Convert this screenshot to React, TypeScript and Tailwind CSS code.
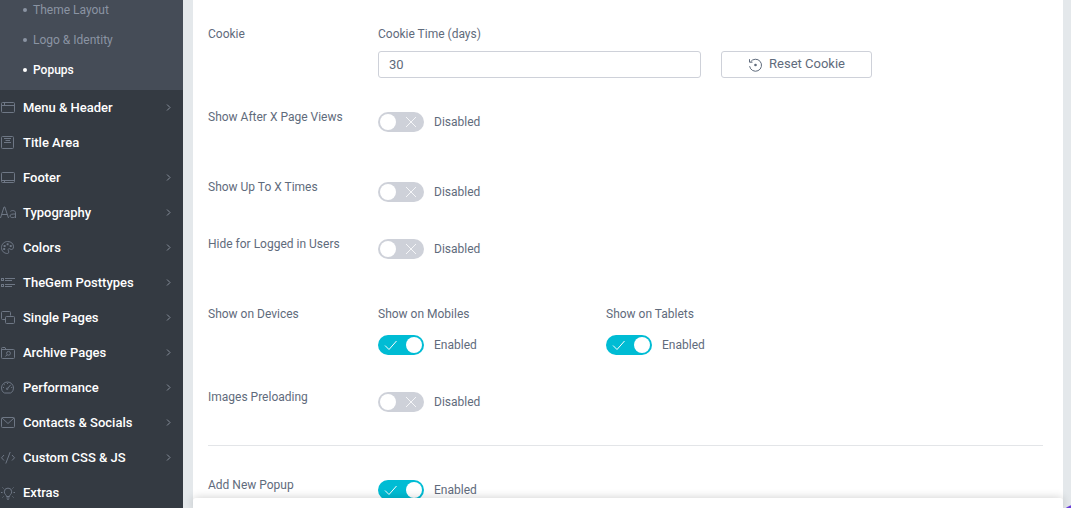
import { useState } from "react";
import type { ReactNode } from "react";

type MenuItem = { label: string; icon: ReactNode; expandable: boolean };

const subItems = [
  { label: "Theme Layout", active: false },
  { label: "Logo & Identity", active: false },
  { label: "Popups", active: true },
];

const menuItems: MenuItem[] = [
  {
    label: "Menu & Header",
    expandable: true,
    icon: (
      <>
        <rect x="1.5" y="2.5" width="13" height="10" rx="1" />
        <path d="M1.5 5.5h13M4.500 3v2" />
      </>
    ),
  },
  {
    label: "Title Area",
    expandable: false,
    icon: (
      <>
        <rect x="1.5" y="1.5" width="12" height="12" rx="1" />
        <path d="M4 3.5h7M5.500 5.5h4.500M4 7.5h7" />
      </>
    ),
  },
  {
    label: "Footer",
    expandable: true,
    icon: (
      <>
        <rect x="1.5" y="2.5" width="13" height="10" rx="1" />
        <path d="M1.5 10.5h13M4.5 10.5v2" />
      </>
    ),
  },
  {
    label: "Typography",
    expandable: true,
    icon: (
      <>
        <path d="M.5 13 4 2h.8L8.500 13M1.700 9.5h5.500" />
        <path d="M10.300 6.500c.9-1.300 5.200-1.500 5.200 1.200V13M15.500 9c-3.500-.1-5.500.3-5.500 2s3.700 2.400 5.500.3" />
      </>
    ),
  },
  {
    label: "Colors",
    expandable: true,
    icon: (
      <>
        <path d="M7.500 13.500C4 13.500 1.500 11 1.500 7.600S4.200 1.500 7.700 1.500s5.800 2.300 5.800 5.300c0 1.900-1 2.700-2.200 2.700-1 0-1.400-.9-2.200-.9s-1.300.8-.8 1.700c.6 1 .7 3.200-.8 3.200z" />
        <g fill="#6e7785" stroke="none">
          <rect x="3.200" y="8" width="2" height="2" rx=".5" />
          <rect x="3.600" y="4.900" width="2" height="2" rx=".5" />
          <rect x="6.600" y="3.200" width="2" height="2" rx=".5" />
          <rect x="9.700" y="4.900" width="2" height="2" rx=".5" />
        </g>
      </>
    ),
  },
  {
    label: "TheGem Posttypes",
    expandable: true,
    icon: (
      <>
        <rect x="1.500" y="3.500" width="2" height="2" />
        <rect x="1.500" y="9.500" width="2" height="2" />
        <path d="M5 3.500h10M5 5.500h7M5 9.500h10M5 11.500h7" />
      </>
    ),
  },
  {
    label: "Single Pages",
    expandable: true,
    icon: (
      <>
        <path d="M5.500 9.500h-3a1 1 0 0 1-1-1v-6a1 1 0 0 1 1-1h7a1 1 0 0 1 1 1v3" />
        <rect x="5.500" y="6.500" width="9" height="7" rx="1" />
      </>
    ),
  },
  {
    label: "Archive Pages",
    expandable: true,
    icon: (
      <>
        <path d="M1.500 12.500v-9a1 1 0 0 1 1-1h2.500l1 2h7.500a1 1 0 0 1 1 1v7a1 1 0 0 1-1 1h-11a1 1 0 0 1-1-1zM1.500 4.500h4.500" />
        <circle cx="8.500" cy="8.300" r="1.900" />
        <path d="m7 9.800-1.600 1.700" />
      </>
    ),
  },
  {
    label: "Performance",
    expandable: true,
    icon: (
      <>
        <path d="M3.300 12.300a6 6 0 1 1 8.400 0c-.4.500-.8.700-1.400.7H4.700c-.6 0-1-.2-1.400-.7z" />
        <path d="M7.800 8.200 10.700 4.800M3 7.500h1M11.200 7.500h1M7.500 3v1M4.300 4.500l.7.700" />
        <circle cx="7.200" cy="8.800" r=".8" />
      </>
    ),
  },
  {
    label: "Contacts & Socials",
    expandable: true,
    icon: (
      <>
        <rect x="1.500" y="2.500" width="13" height="10" rx="1" />
        <path d="m2 3 6 5.500L14 3" />
      </>
    ),
  },
  {
    label: "Custom CSS & JS",
    expandable: true,
    icon: <path d="M4 5 1.500 7.800 4 10.500M12 5l2.500 2.800L12 10.500M10.200 2 5.800 13.500" />,
  },
  {
    label: "Extras",
    expandable: false,
    icon: (
      <>
        <path d="M6.500 11.500c0-1.700-2.200-2.300-2.200-4.700a3.700 3.700 0 0 1 7.400 0c0 2.400-2.200 3-2.200 4.700zM6.500 13h3M7.300 14.500h1.400" />
        <path d="M1 7.500h1.500M13.500 7.500H15M2.500 2.500l1 1M13.500 2.500l-1 1M2.500 12.500l1-1M13.500 12.500l-1-1" />
      </>
    ),
  },
];

function Sidebar() {
  return (
    <nav className="w-[183px] shrink-0 overflow-hidden bg-[#343a42] text-[13px]">
      <ul className="-mt-[5px] bg-[#454c57] pb-[5px] text-xs">
        {subItems.map(({ label, active }) => (
          <li key={label}>
            <a
              href="#"
              className={`flex h-[30px] items-center gap-1.5 pl-[23px] ${active ? "font-medium text-white" : "text-[#8b94a3]"}`}
            >
              <span className="size-1 rounded-full bg-current" />
              {label}
            </a>
          </li>
        ))}
      </ul>
      <ul>
        {menuItems.map(({ label, icon, expandable }) => (
          <li key={label}>
            <a href="#" className="flex h-[35px] items-center pr-3 font-medium text-white">
              <svg viewBox="0 -1 16 17" fill="none" stroke="#6e7785" className="mr-[7px] h-[17px] w-4 shrink-0">
                {icon}
              </svg>
              <span className="flex-1">{label}</span>
              {expandable && (
                <svg viewBox="0 0 5 7" fill="none" stroke="#858d99" className="h-[7px] w-[5px]">
                  <path d="m1 .5 3 3-3 3" />
                </svg>
              )}
            </a>
          </li>
        ))}
      </ul>
    </nav>
  );
}

function Toggle({ name, initial = false }: { name: string; initial?: boolean }) {
  const [on, setOn] = useState(initial);
  return (
    <label className="flex h-5 w-fit cursor-pointer items-center gap-2.5">
      <input
        type="checkbox"
        role="switch"
        aria-label={name}
        checked={on}
        onChange={(e) => setOn(e.target.checked)}
        className="peer sr-only"
      />
      <span
        className={`flex h-5 w-[46px] items-center justify-between rounded-full px-0.5 ${on ? "flex-row-reverse bg-[#00bcd4]" : "bg-[#ced1d9]"}`}
      >
        <span className="size-4 rounded-full bg-white" />
        <svg viewBox="0 0 14 12" fill="none" stroke="white" className="mx-1 h-3 w-3.5">
          {on ? <path d="m1 6.500 4 4 7.500-8.500" /> : <path d="m2 1 10 10M12 1 2 11" strokeOpacity=".8" />}
        </svg>
      </span>
      <span>{on ? "Enabled" : "Disabled"}</span>
    </label>
  );
}

function Row({ label, className, children }: { label: string; className: string; children: ReactNode }) {
  return (
    <div className={`flex ${className}`}>
      <h3 className="w-[170px] shrink-0">{label}</h3>
      <div className="min-w-0 flex-1">{children}</div>
    </div>
  );
}

function ResetIcon() {
  return (
    <svg viewBox="0 0 16 16" fill="none" stroke="currentColor" className="size-4">
      <path d="M2.600 5.800A6 6 0 1 1 1.600 10.200" />
      <path d="M1.500 3.200v3h3" />
      <circle cx="7.500" cy="9" r="1.300" fill="currentColor" stroke="none" />
    </svg>
  );
}

export default function App() {
  return (
    <div className="relative flex h-screen overflow-hidden bg-[#e4e8eb] font-['Roboto',sans-serif]">
      <Sidebar />
      <main className="mr-2 ml-2.5 flex min-w-0 flex-1 flex-col bg-white text-xs leading-5 text-[#5f6b7c]">
        <div className="min-h-0 flex-1 overflow-hidden pt-6 pr-5 pl-[15px]">
          <Row label="Cookie" className="mb-[29px]">
            <div className="flex items-end gap-5">
              <div className="w-[323px]">
                <label htmlFor="cookie-time" className="mb-[7px] block">
                  Cookie Time (days)
                </label>
                <input
                  id="cookie-time"
                  defaultValue="30"
                  className="block h-[27px] w-full rounded-[3px] border border-[#ced1d9] px-2.5 text-[13px] outline-none"
                />
              </div>
              <button
                type="button"
                className="flex h-[27px] w-[151px] items-center justify-center gap-[5px] rounded-[3px] border border-[#ced1d9] pb-0.5 text-[13px]"
              >
                <ResetIcon />
                Reset Cookie
              </button>
            </div>
          </Row>
          <Row label="Show After X Page Views" className="mb-[45px]">
            <div className="pt-[5px]">
              <Toggle name="Show After X Page Views" />
            </div>
          </Row>
          <Row label="Show Up To X Times" className="mb-8">
            <div className="pt-[5px]">
              <Toggle name="Show Up To X Times" />
            </div>
          </Row>
          <Row label="Hide for Logged in Users" className="mb-[45px]">
            <div className="pt-[5px]">
              <Toggle name="Hide for Logged in Users" />
            </div>
          </Row>
          <Row label="Show on Devices" className="mb-8">
            <div className="flex">
              <div className="w-[228px]">
                <h4 className="mb-[11px]">Show on Mobiles</h4>
                <Toggle name="Show on Mobiles" initial />
              </div>
              <div>
                <h4 className="mb-[11px]">Show on Tablets</h4>
                <Toggle name="Show on Tablets" initial />
              </div>
            </div>
          </Row>
          <Row label="Images Preloading" className="mb-[33px]">
            <div className="pt-[5px]">
              <Toggle name="Images Preloading" />
            </div>
          </Row>
          <hr className="mb-[29px] border-[#e3e5e8]" />
          <Row label="Add New Popup" className="">
            <div className="pt-[5px]">
              <Toggle name="Add New Popup" initial />
            </div>
          </Row>
        </div>
        <footer className="z-10 h-2.5 shrink-0 rounded-t-[3px] bg-white shadow-[0_0_10px_rgba(0,0,0,0.2)]" />
      </main>
      <button
        type="button"
        aria-label="Help"
        className="absolute -right-8 -bottom-11 z-20 size-12 rounded-full bg-[#6a3fd8]"
      />
    </div>
  );
}
